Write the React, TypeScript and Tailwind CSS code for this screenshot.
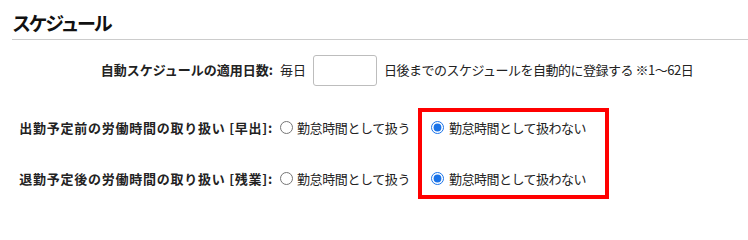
import { useState } from 'react'

const FONT = { fontFamily: '"Noto Sans CJK JP", "Noto Sans", sans-serif' }

type RadioRowProps = {
  label: string
  name: string
}

function RadioRow({ label, name }: RadioRowProps) {
  const [value, setValue] = useState('no')
  return (
    <div className="flex items-center h-[51px]">
      <div className="w-[273px] shrink-0 text-right font-bold text-[#222] tracking-[0.75px]">{label}</div>
      <label className="flex items-center ml-[7px] w-[138px]">
        <input
          type="radio"
          name={name}
          checked={value === 'yes'}
          onChange={() => setValue('yes')}
          className="m-0 w-[13px] h-[13px] accent-[#1a73e8]"
        />
        <span className="ml-[4px] tracking-[-0.4px]">勤怠時間として扱う</span>
      </label>
      <label className="flex items-center ml-[13px]">
        <input
          type="radio"
          name={name}
          checked={value === 'no'}
          onChange={() => setValue('no')}
          className="m-0 w-[13px] h-[13px] accent-[#1a73e8]"
        />
        <span className="ml-[5px] tracking-[-0.5px]">勤怠時間として扱わない</span>
      </label>
    </div>
  )
}

export default function App() {
  const [days, setDays] = useState('')
  return (
    <div className="relative w-[748px] h-[215px] bg-white text-[13px] text-[#222] overflow-hidden" style={FONT}>
      <div className="pl-3 pt-[10px]">
        <h2 className="text-[19px] font-bold leading-[26px] text-[#111] tracking-[-2.4px]">スケジュール</h2>
        <div className="mt-[3px] border-t border-[#cccccc]" />
      </div>

      <div className="flex items-center mt-[14px] h-[32px]">
        <div className="w-[273px] shrink-0 text-right font-bold">自動スケジュールの適用日数:</div>
        <span className="ml-[7px]">毎日</span>
        <input
          type="text"
          value={days}
          onChange={(e) => setDays(e.target.value)}
          className="ml-[7px] w-[64px] h-[31px] border border-[#bdbdbd] rounded-[3px] px-2 outline-none"
        />
        <span className="ml-[7px] tracking-[-0.5px]">日後までのスケジュールを自動的に登録する ※1〜62日</span>
      </div>

      <div className="mt-[16px]">
        <RadioRow label="出勤予定前の労働時間の取り扱い [早出]:" name="early" />
        <RadioRow label="退勤予定後の労働時間の取り扱い [残業]:" name="late" />
      </div>

      <div className="absolute left-[418px] top-[108px] w-[191px] h-[91px] border-4 border-[#ff0000] pointer-events-none" />
    </div>
  )
}
